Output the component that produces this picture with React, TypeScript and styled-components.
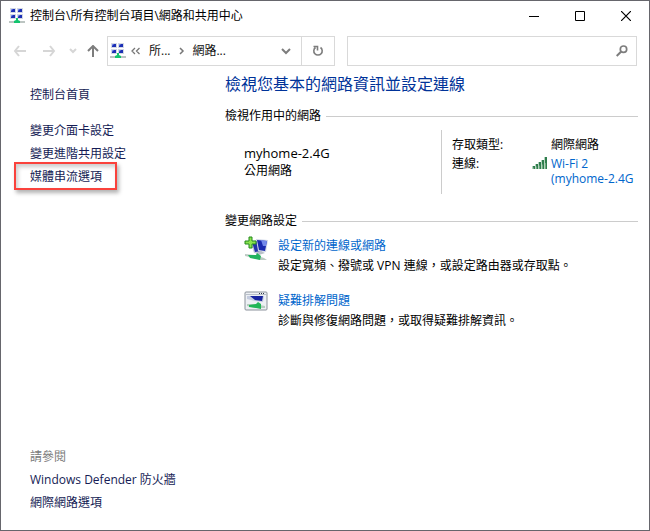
import React from "react";
import styled, { createGlobalStyle } from "styled-components";

const GlobalStyle = createGlobalStyle`
  *, *::before, *::after { box-sizing: border-box; }
  body {
    margin: 0;
    background: #fff;
    color: #000;
    font: 12px/20px "Open Sans", "Noto Sans CJK TC", sans-serif;
  }
  button, input { font: inherit; color: inherit; }
  button { padding: 0; border: 0; background: none; }
  svg { display: block; flex: none; }
`;

const Window = styled.div`
  display: flex;
  flex-direction: column;
  min-height: 100vh;
  border: 1px solid #66666c;
  background: #fff;
`;

const TitleBar = styled.header`
  display: flex;
  align-items: center;
  height: 29px;
  padding-left: 8px;
`;

const Title = styled.h1`
  flex: 1;
  min-width: 0;
  margin: 0 0 0 5px;
  overflow: hidden;
  font-size: 12px;
  font-weight: 400;
  white-space: nowrap;
`;

const CaptionButton = styled.button`
  display: grid;
  place-items: center;
  width: 46px;
  height: 29px;
`;

const Toolbar = styled.div`
  display: grid;
  grid-template-columns: 94px minmax(0, 228fr) minmax(0, 302fr);
  align-items: center;
  height: 30px;
  margin: 6px 12px 0 12px;
`;

const NavButtons = styled.nav`
  display: grid;
  grid-template-columns: 30px 26px 18px 20px;
  align-items: center;
`;

const NavButton = styled.button<{ $muted?: boolean }>`
  color: ${(p) => (p.$muted ? "#d6d6d6" : "#7d7d7d")};
`;

const AddressBar = styled.div`
  display: flex;
  align-items: center;
  height: 30px;
  padding-left: 2px;
  border: 1px solid #d9d9d9;
  color: #777;
`;

const Crumb = styled.button<{ $grow?: boolean }>`
  flex: ${(p) => (p.$grow ? 1 : "none")};
  margin: 0 9px 0 7px;
  color: #111;
  text-align: left;
`;

const BarButton = styled.button<{ $divided?: boolean }>`
  display: grid;
  place-items: center;
  width: ${(p) => (p.$divided ? 33 : 30)}px;
  height: 28px;
  border-left: ${(p) => (p.$divided ? "1px solid #d9d9d9" : "0")};
  color: #7d7d7d;
`;

const SearchBox = styled.label`
  display: flex;
  align-items: center;
  height: 30px;
  margin-left: 12px;
  padding-right: 8px;
  border: 1px solid #d9d9d9;
  color: #7d7d7d;
`;

const SearchInput = styled.input`
  flex: 1;
  min-width: 0;
  padding: 0 8px;
  border: 0;
  outline: 0;
  background: none;
`;

const Body = styled.div`
  display: grid;
  flex: 1;
  grid-template-columns: 224px minmax(0, 1fr);
`;

const Sidebar = styled.aside`
  display: flex;
  flex-direction: column;
  justify-content: space-between;
  padding: 17px 0 16px 29px;
  line-height: 23px;
`;

const LinkList = styled.nav`
  display: flex;
  flex-direction: column;
  align-items: flex-start;
`;

const SideLink = styled.a<{ $home?: boolean; $marked?: boolean }>`
  position: relative;
  margin-bottom: ${(p) => (p.$home ? 13 : 0)}px;
  color: #151c55;
  text-decoration: none;

  &::after {
    content: "";
    display: ${(p) => (p.$marked ? "block" : "none")};
    position: absolute;
    inset: -3px -15px -2px -16px;
    border: 2px solid #fa423c;
    box-shadow: 2px 3px 4px rgba(0, 0, 0, 0.3), inset 2px 3px 4px rgba(0, 0, 0, 0.2);
  }
`;

const SeeAlso = styled.div`
  color: #7a7a7a;
`;

const Main = styled.main`
  padding: 6px 11px 0 0;
`;

const Heading = styled.h2`
  margin: 0;
  color: #003399;
  font-size: 16px;
  font-weight: 400;
  line-height: 24px;
`;

const SectionTitle = styled.h3<{ $first?: boolean }>`
  display: flex;
  align-items: center;
  gap: 5px;
  margin: ${(p) => (p.$first ? 10 : 17)}px 0 0;
  font-size: 12px;
  font-weight: 400;
  line-height: 20px;

  &::after {
    content: "";
    flex: 1;
    height: 1px;
    background: #ccc;
  }
`;

const Network = styled.section`
  display: grid;
  grid-template-columns: 216fr 197fr;
  min-height: 64px;
  margin-top: 4px;
`;

const NetworkName = styled.div`
  padding: 14px 0 0 19px;
  line-height: 18px;
`;

const Name = styled.strong`
  display: block;
  font-size: 13px;
  font-weight: 500;
`;

const Details = styled.dl`
  display: grid;
  grid-template-columns: 80px minmax(0, 1fr);
  align-content: start;
  row-gap: 4px;
  margin: 0;
  padding: 7px 0 0 10px;
  border-left: 1px solid #ccc;
  line-height: 15px;
`;

const Term = styled.dt`
  white-space: nowrap;
`;

const Value = styled.dd`
  display: grid;
  grid-template-columns: 16px minmax(0, 1fr);
  column-gap: 3px;
  margin: 0;
`;

const ValueText = styled.span`
  grid-column: 2;
`;

const Link = styled.a`
  color: #0066cc;
  text-decoration: none;
`;

const Tasks = styled.ul`
  display: grid;
  gap: 15px;
  margin: 5px 0 0;
  padding: 0 0 0 19px;
  list-style: none;
`;

const Task = styled.li`
  display: grid;
  grid-template-columns: 25px minmax(0, 1fr);
  column-gap: 9px;
`;

const TaskText = styled.p`
  margin: 0;
`;

const NetworkIcon = () => (
  <svg width="16" height="16" viewBox="0 0 16 16" aria-hidden="true">
    {[
      [1, 0],
      [8, 0],
      [1, 6],
      [8, 6],
    ].map(([x, y]) => (
      <g key={`${x}-${y}`}>
        <rect x={x} y={y} width="6" height="5" fill="#d3d8e4" />
        <rect x={x + 1} y={y + 1} width="4" height="3" fill="#1c2fb4" />
        <path d={`M${x + 1} ${y + 1}h2l-2 2z`} fill="#7f93ee" />
      </g>
    ))}
    <rect x="0" y="13" width="16" height="2" fill="#bcc5c2" />
    <path d="M7 10h2v2l2 1v2H5v-2l2-1z" fill="#13c46e" />
  </svg>
);

const Arrow = ({ d, w = 13, h = 12 }: { d: string; w?: number; h?: number }) => (
  <svg width={w} height={h} viewBox={`0 0 ${w} ${h}`} fill="none" stroke="currentColor" strokeWidth="2" aria-hidden="true">
    <path d={d} />
  </svg>
);

const SignalIcon = () => (
  <svg width="16" height="13" viewBox="0 0 16 13" aria-hidden="true">
    {[3, 5, 7, 9, 12].map((h, i) => (
      <g key={h}>
        <rect x={i * 3} y={13 - h} width="3" height={h} fill="#b5d3bf" />
        <rect x={i * 3 + 1} y={13 - h} width="2" height={h} fill="#2f7d4d" />
        <rect x={i * 3 + 1} y={13 - h / 2} width="1" height={h / 2} fill="#6fa980" />
      </g>
    ))}
  </svg>
);

const NewConnectionIcon = () => (
  <svg width="25" height="26" viewBox="0 0 25 26" aria-hidden="true">
    <path d="M6 5l9-1 3 12-8 1z" fill="#c3cada" />
    <path d="M8 6l6-1 3 10-6 1z" fill="#2331a8" />
    <path d="M12 3l12 1-2 12-8-1z" fill="#d0d6e6" />
    <path d="M13 4l10 1-2 10-6-1z" fill="#1a2aae" />
    <path d="M17 4l6 1-1 5-3 0z" fill="#7288ea" />
    <path d="M11 17l6-2 4 2-6 2z" fill="#b9c0c9" />
    <path d="M1 18l10 1 9 3 3 2-7 0-6-2-9-2z" fill="#bccac3" />
    <path d="M4 19l8 0 1-2 4 3-1 4-5-1-5-1z" fill="#22b35e" />
    <path d="M5 1h3v4h4v3H8v4H5V8H1V5h4z" fill="#8be34e" stroke="#23891d" strokeWidth="1" />
  </svg>
);

const TroubleshootIcon = () => (
  <svg width="24" height="20" viewBox="0 0 24 20" aria-hidden="true">
    <rect x="1" y="1" width="22" height="18" rx="1" fill="#edf0f4" stroke="#8b929b" />
    <path d="M2 3.5h20" stroke="#b9c0ca" />
    <path d="M15 2.5h1m1 0h1m1 0h1" stroke="#353c49" />
    <path d="M3 5h17l-1 6-8-1-8-2z" fill="#c3cbdf" />
    <path d="M6 5h13l-1 5-7-1z" fill="#1724a0" />
    <path d="M3 13h8l10 2v2H11l-8-2z" fill="#b5cdbe" />
    <path d="M5 14l7-1 2-2 3 2v5l-5-1-7-1z" fill="#20b657" />
  </svg>
);

export default function App() {
  return (
    <>
      <GlobalStyle />
      <Window lang="zh-TW">
        <TitleBar>
          <NetworkIcon />
          <Title>控制台\所有控制台項目\網路和共用中心</Title>
          <CaptionButton aria-label="最小化">
            <svg width="10" height="10" viewBox="0 0 10 10"><path d="M0 5.5h10" stroke="#000" /></svg>
          </CaptionButton>
          <CaptionButton aria-label="最大化">
            <svg width="10" height="10" viewBox="0 0 10 10"><path d="M.5.5h9v9h-9z" fill="none" stroke="#000" /></svg>
          </CaptionButton>
          <CaptionButton aria-label="關閉">
            <svg width="10" height="10" viewBox="0 0 10 10"><path d="M0 0l10 10M10 0L0 10" stroke="#000" strokeWidth="1.2" /></svg>
          </CaptionButton>
        </TitleBar>

        <Toolbar>
          <NavButtons aria-label="瀏覽">
            <NavButton $muted aria-label="上一頁"><Arrow d="M6 1L2 6l4 5M2 6h11" /></NavButton>
            <NavButton $muted aria-label="下一頁"><Arrow d="M7 1l4 5-4 5M11 6H0" /></NavButton>
            <NavButton $muted aria-label="最近的位置"><Arrow d="M1 1l3 3 3-3" w={8} h={6} /></NavButton>
            <NavButton aria-label="上移"><Arrow d="M1 6l5-5 5 5M6 1v11" w={12} h={12} /></NavButton>
          </NavButtons>
          <AddressBar>
            <NetworkIcon />
            <svg width="16" height="8" viewBox="0 0 16 8" fill="none" stroke="currentColor" strokeWidth="1.3" aria-hidden="true">
              <path d="M9 1L6 4l3 3M13.5 1l-3 3 3 3" />
            </svg>
            <Crumb>所...</Crumb>
            <svg width="6" height="8" viewBox="0 0 6 8" fill="none" stroke="currentColor" strokeWidth="1.5" aria-hidden="true">
              <path d="M1 1l3 3-3 3" />
            </svg>
            <Crumb $grow>網路...</Crumb>
            <BarButton aria-label="先前的位置"><Arrow d="M1 1l4 4 4-4" w={10} h={7} /></BarButton>
            <BarButton $divided aria-label="重新整理">
              <svg width="12" height="12" viewBox="0 0 12 12" fill="none" stroke="currentColor" strokeWidth="1.6">
                <path d="M8.5 2.5a4.2 4.2 0 1 1-5 0M1.500 1.500h4v4" />
              </svg>
            </BarButton>
          </AddressBar>
          <SearchBox>
            <SearchInput type="search" aria-label="搜尋控制台" />
            <svg width="12" height="12" viewBox="0 0 12 12" fill="none" stroke="currentColor" strokeWidth="1.7" aria-hidden="true">
              <circle cx="7.5" cy="4.2" r="3.2" />
              <path d="M5 6.7L.7 11" strokeWidth="2" />
            </svg>
          </SearchBox>
        </Toolbar>

        <Body>
          <Sidebar>
            <LinkList aria-label="工作">
              <SideLink href="#home" $home>控制台首頁</SideLink>
              <SideLink href="#adapter">變更介面卡設定</SideLink>
              <SideLink href="#sharing">變更進階共用設定</SideLink>
              <SideLink href="#media" $marked>媒體串流選項</SideLink>
            </LinkList>
            <LinkList aria-label="請參閱">
              <SeeAlso>請參閱</SeeAlso>
              <SideLink href="#firewall">Windows Defender 防火牆</SideLink>
              <SideLink href="#internet">網際網路選項</SideLink>
            </LinkList>
          </Sidebar>

          <Main>
            <Heading>檢視您基本的網路資訊並設定連線</Heading>
            <SectionTitle $first>檢視作用中的網路</SectionTitle>
            <Network>
              <NetworkName>
                <Name>myhome-2.4G</Name>
                公用網路
              </NetworkName>
              <Details>
                <Term>存取類型:</Term>
                <Value><ValueText>網際網路</ValueText></Value>
                <Term>連線:</Term>
                <Value>
                  <SignalIcon />
                  <Link href="#wifi">Wi-Fi 2 (myhome-2.4G</Link>
                </Value>
              </Details>
            </Network>
            <SectionTitle>變更網路設定</SectionTitle>
            <Tasks>
              <Task>
                <NewConnectionIcon />
                <TaskText>
                  <Link href="#new">設定新的連線或網路</Link>
                  <br />
                  設定寬頻、撥號或 VPN 連線，或設定路由器或存取點。
                </TaskText>
              </Task>
              <Task>
                <TroubleshootIcon />
                <TaskText>
                  <Link href="#troubleshoot">疑難排解問題</Link>
                  <br />
                  診斷與修復網路問題，或取得疑難排解資訊。
                </TaskText>
              </Task>
            </Tasks>
          </Main>
        </Body>
      </Window>
    </>
  );
}
